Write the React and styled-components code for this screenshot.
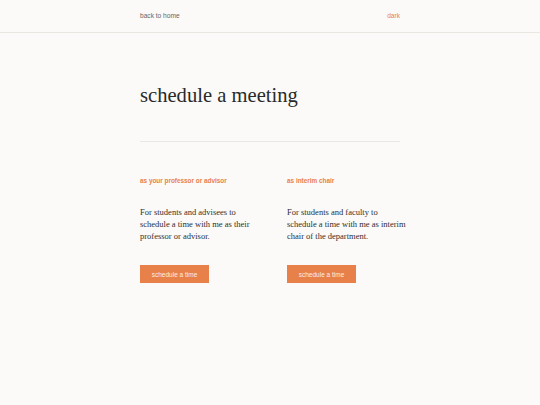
import React from "react";
import styled, { createGlobalStyle } from "styled-components";

const GlobalStyle = createGlobalStyle`
  html, body {
    margin: 0;
    padding: 0;
    background: #fbfaf8;
  }
  body {
    font-family: "Liberation Sans", Arial, sans-serif;
    color: #2b2b2b;
  }
`;

const Header = styled.header`
  height: 33px;
  border-bottom: 1px solid #ebe8e4;
  box-sizing: border-box;
`;

const HeaderInner = styled.div`
  width: 260px;
  margin: 0 auto;
  height: 100%;
  display: flex;
  align-items: center;
  justify-content: space-between;
  padding-bottom: 1px;
  box-sizing: border-box;
`;

const NavLink = styled.a`
  font-size: 6.6px;
  color: ${(p) => (p.$accent ? "#e8804a" : "#666")};
  text-decoration: none;
`;

const Main = styled.main`
  width: 260px;
  margin: 0 auto;
  padding-top: 50px;
`;

const Title = styled.h1`
  font-family: Georgia, "Liberation Serif", serif;
  font-weight: 400;
  font-size: 20.6px;
  line-height: 24px;
  margin: 0;
  color: #2a2a2a;
`;

const Divider = styled.hr`
  border: none;
  border-top: 1px solid #ebe8e4;
  margin: 34px 0 0;
`;

const Columns = styled.div`
  display: grid;
  grid-template-columns: 120px 122px;
  column-gap: 27px;
  padding-top: 34px;
`;

const Column = styled.section`
  display: flex;
  flex-direction: column;
  align-items: flex-start;
`;

const Label = styled.h2`
  font-size: 6.4px;
  font-weight: 700;
  color: #e8804a;
  margin: 0;
  line-height: 9px;
`;

const Body = styled.p`
  font-family: Georgia, "Liberation Serif", serif;
  font-size: 8.5px;
  line-height: 12px;
  color: #2f2f2f;
  margin: 21px 0 0;
`;

const Button = styled.button`
  margin-top: 23px;
  width: 69px;
  height: 18px;
  border: none;
  background: #e8804a;
  color: #fdeee4;
  font-family: "Liberation Sans", Arial, sans-serif;
  font-size: 6.5px;
  padding: 0;
  cursor: pointer;
`;

const options = [
  {
    label: "as your professor or advisor",
    text: "For students and advisees to schedule a time with me as their professor or advisor.",
  },
  {
    label: "as interim chair",
    text: "For students and faculty to schedule a time with me as interim chair of the department.",
  },
];

export default function App() {
  return (
    <>
      <GlobalStyle />
      <Header>
        <HeaderInner>
          <NavLink href="#">back to home</NavLink>
          <NavLink href="#" $accent>
            dark
          </NavLink>
        </HeaderInner>
      </Header>
      <Main>
        <Title>schedule a meeting</Title>
        <Divider />
        <Columns>
          {options.map((o) => (
            <Column key={o.label}>
              <Label>{o.label}</Label>
              <Body>{o.text}</Body>
              <Button>schedule a time</Button>
            </Column>
          ))}
        </Columns>
      </Main>
    </>
  );
}
